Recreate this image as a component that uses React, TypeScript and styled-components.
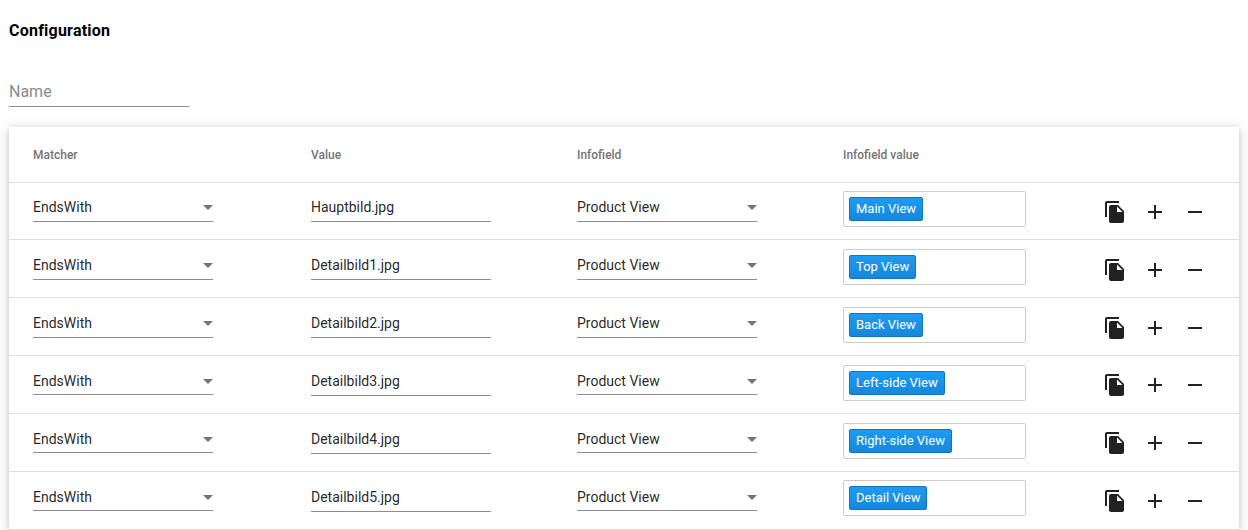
import React from "react";
import styled, { createGlobalStyle } from "styled-components";

const GlobalStyle = createGlobalStyle`
  html, body {
    margin: 0;
    padding: 0;
    background: #fff;
    overflow: hidden;
    font-family: Roboto, "Liberation Sans", sans-serif;
  }
`;

const Page = styled.div`
  padding: 21px 9px 0;
  width: 1230px;
  height: 509px;
  overflow: hidden;
`;

const Title = styled.h2`
  margin: 0;
  font-size: 16px;
  line-height: 19px;
  font-weight: 700;
  letter-spacing: 0.22px;
  color: #000;
`;

const NameField = styled.div`
  width: 180px;
  height: 27px;
  margin-top: 39px;
  border-bottom: 1px solid #8c8c8c;
  color: #8a8a8a;
  font-size: 16px;
  line-height: 25px;
`;

const Card = styled.div`
  margin-top: 20px;
  background: #fff;
  box-shadow: 0 2px 6px rgba(0, 0, 0, 0.14), 0 1px 12px rgba(0, 0, 0, 0.14);
`;

const HeaderRow = styled.div`
  display: grid;
  grid-template-columns: 278px 266px 266px 1fr;
  align-items: center;
  height: 55px;
  padding-left: 24px;
  border-bottom: 1px solid #e0e0e0;
`;

const HeaderCell = styled.div`
  color: #757575;
  font-size: 12px;
  font-weight: 500;
  line-height: 16px;
`;

const Body = styled.div`
  margin-top: -0.55px;
`;

const Row = styled.div`
  display: grid;
  grid-template-columns: 278px 266px 266px 1fr;
  align-items: center;
  box-sizing: border-box;
  height: 57.85px;
  padding-left: 24px;
  border-bottom: 1px solid #e0e0e0;
`;

const SelectField = styled.div`
  position: relative;
  box-sizing: border-box;
  width: 180px;
  height: 28.5px;
  margin-top: -6.5px;
  border-bottom: 1px solid #8c8c8c;
  color: rgba(0, 0, 0, 0.87);
  font-size: 14px;
  line-height: 29px;
`;

const TextField = styled.div`
  box-sizing: border-box;
  width: 180px;
  height: 29px;
  margin-top: -6px;
  border-bottom: 1px solid #8c8c8c;
  color: rgba(0, 0, 0, 0.87);
  font-size: 14px;
  line-height: 28px;
`;

const Caret = styled.span`
  position: absolute;
  right: 0;
  top: 12px;
  width: 0;
  height: 0;
  border-left: 5px solid transparent;
  border-right: 5px solid transparent;
  border-top: 5px solid #757575;
`;

const TagBox = styled.div`
  box-sizing: border-box;
  display: flex;
  align-items: flex-start;
  width: 183px;
  height: 36px;
  margin-top: -3.5px;
  padding: 5px 5px;
  border: 1px solid #ccc;
  border-radius: 2px;
`;

const Tag = styled.span`
  box-sizing: border-box;
  height: 24px;
  padding: 0 6px;
  background: linear-gradient(#1e9bf0, #1787da);
  border: 1px solid #1174bd;
  border-radius: 2px;
  color: #fff;
  font-size: 13px;
  line-height: 22px;
  white-space: nowrap;
`;

const TagCell = styled.div`
  display: flex;
  align-items: center;
  justify-content: space-between;
  padding-right: 24px;
`;

const Actions = styled.div`
  display: flex;
  margin-top: 2px;
`;

const IconButton = styled.button`
  display: flex;
  width: 40px;
  height: 40px;
  padding: 8px;
  border: none;
  background: none;
  color: #212121;
  cursor: pointer;
`;

const Icon = ({ d }: { d: string }) => (
  <svg width="24" height="24" viewBox="0 0 24 24" fill="currentColor">
    <path d={d} />
  </svg>
);

const copyPath =
  "M16 1H4c-1.1 0-2 .9-2 2v14h2V3h12V1zm-1 4l6 6v10c0 1.1-.9 2-2 2H7.99C6.89 23 6 22.1 6 21l.01-14c0-1.1.89-2 1.99-2h7zm-1 7h5.5L14 6.5V12z";
const plusPath = "M19 13h-6v6h-2v-6H5v-2h6V5h2v6h6v2z";
const minusPath = "M19 13H5v-2h14v2z";

const rows = [
  { value: "Hauptbild.jpg", tag: "Main View" },
  { value: "Detailbild1.jpg", tag: "Top View" },
  { value: "Detailbild2.jpg", tag: "Back View" },
  { value: "Detailbild3.jpg", tag: "Left-side View" },
  { value: "Detailbild4.jpg", tag: "Right-side View" },
  { value: "Detailbild5.jpg", tag: "Detail View" },
];

const App = () => {
  return (
    <Page>
      <GlobalStyle />
      <Title>Configuration</Title>
      <NameField>Name</NameField>
      <Card>
        <HeaderRow>
          <HeaderCell>Matcher</HeaderCell>
          <HeaderCell>Value</HeaderCell>
          <HeaderCell>Infofield</HeaderCell>
          <HeaderCell>Infofield value</HeaderCell>
        </HeaderRow>
        <Body>
          {rows.map((row) => (
            <Row key={row.value}>
              <SelectField>
                EndsWith
                <Caret />
              </SelectField>
              <TextField>{row.value}</TextField>
              <SelectField>
                Product View
                <Caret />
              </SelectField>
              <TagCell>
                <TagBox>
                  <Tag>{row.tag}</Tag>
                </TagBox>
                <Actions>
                  <IconButton aria-label="copy">
                    <Icon d={copyPath} />
                  </IconButton>
                  <IconButton aria-label="add">
                    <Icon d={plusPath} />
                  </IconButton>
                  <IconButton aria-label="remove">
                    <Icon d={minusPath} />
                  </IconButton>
                </Actions>
              </TagCell>
            </Row>
          ))}
        </Body>
      </Card>
    </Page>
  );
};

export default App;
